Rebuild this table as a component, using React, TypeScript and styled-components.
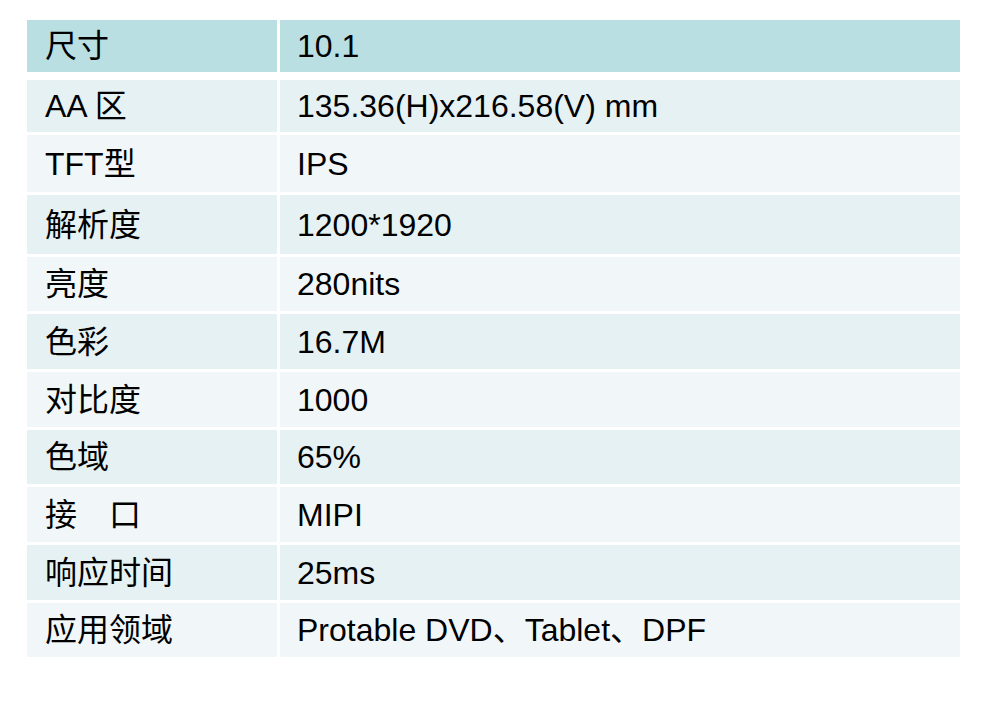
import styled, { createGlobalStyle } from "styled-components";

const GlobalStyle = createGlobalStyle`
    html, body {
        margin: 0;
        padding: 0;
        background: #ffffff;
    }
    body {
        font-family: "Liberation Sans", "Noto Sans CJK SC", sans-serif;
        color: #000000;
    }
`;

type Tone = "head" | "dark" | "light";

const tones: Record<Tone, string> = {
    head: "#b9dfe2",
    dark: "#e6f1f3",
    light: "#f1f7f9",
};

const Page = styled.div`
    width: 990px;
    height: 728px;
    padding: 20px 0 0 27px;
    box-sizing: border-box;
`;

const Table = styled.div`
    display: flex;
    flex-direction: column;
    gap: 3px;
    width: 933px;
`;

const Row = styled.div<{ $height: number; $head?: boolean }>`
    display: grid;
    grid-template-columns: 250px 680px;
    column-gap: 3px;
    height: ${props => props.$height}px;
    margin-bottom: ${props => (props.$head ? 5 : 0)}px;
`;

const Cell = styled.div<{ $tone: Tone; $value?: boolean }>`
    display: flex;
    align-items: center;
    background: ${props => tones[props.$tone]};
    padding-left: ${props => (props.$value ? 17 : 18)}px;
    font-size: 32px;
    line-height: 1;
    white-space: pre;
`;

const specs: [string, string, number][] = [
    ["尺寸", "10.1", 52],
    ["AA 区", "135.36(H)x216.58(V) mm", 52],
    ["TFT型", "IPS", 57],
    ["解析度", "1200*1920", 59],
    ["亮度", "280nits", 54],
    ["色彩", "16.7M", 55],
    ["对比度", "1000", 55],
    ["色域", "65%", 54],
    ["接\u3000口", "MIPI", 55],
    ["响应时间", "25ms", 55],
    ["应用领域", "Protable DVD、Tablet、DPF", 54],
];

export default function App() {
    return (
        <>
            <GlobalStyle />
            <Page>
                <Table>
                    {specs.map(([label, value, height], i) => {
                        const tone: Tone = i === 0 ? "head" : i % 2 === 1 ? "dark" : "light";
                        return (
                            <Row key={label} $height={height} $head={i === 0}>
                                <Cell $tone={tone}>{label}</Cell>
                                <Cell $tone={tone} $value>{value}</Cell>
                            </Row>
                        );
                    })}
                </Table>
            </Page>
        </>
    );
}
